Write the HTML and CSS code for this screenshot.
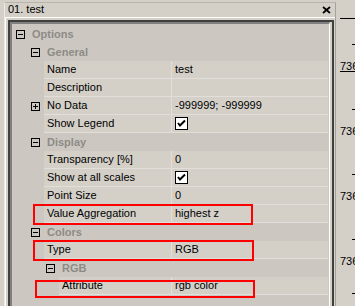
FILE: index.html
```html
<!DOCTYPE html>
<html>
  <head>
    <title>Layer properties</title>
    <link rel="stylesheet" href="styles.css">
  </head>
  <body>
    <div class="window">
      <div class="pane">
        <div class="titlebar">
          <span class="title">01. test</span>
          <svg class="close" width="9" height="8" viewBox="0 0 9 8">
            <path d="M1 1 L8 7 M8 1 L1 7" stroke="#000" stroke-width="1.7" fill="none" />
          </svg>
        </div>
        <div class="pane-body">
          <div class="frame">
            <div class="grid">

              <div class="row cat d0">
                <svg class="toggle" width="9" height="9" viewBox="0 0 9 9"><rect x="0.5" y="0.5" width="8" height="8" fill="none" stroke="#000" /><path d="M2 4.5 H7" stroke="#000" /></svg>
                <span class="cat-name">Options</span>
              </div>

              <div class="row cat d1">
                <svg class="toggle" width="9" height="9" viewBox="0 0 9 9"><rect x="0.5" y="0.5" width="8" height="8" fill="none" stroke="#000" /><path d="M2 4.5 H7" stroke="#000" /></svg>
                <span class="cat-name">General</span>
              </div>

              <div class="row prop d2">
                <div class="gutter"></div>
                <div class="label">Name</div>
                <div class="value">test</div>
              </div>

              <div class="row prop d2">
                <div class="gutter"></div>
                <div class="label">Description</div>
                <div class="value"></div>
              </div>

              <div class="row prop d2">
                <div class="gutter">
                  <svg class="toggle" width="9" height="9" viewBox="0 0 9 9"><rect x="0.5" y="0.5" width="8" height="8" fill="none" stroke="#000" /><path d="M2 4.5 H7 M4.5 2 V7" stroke="#000" /></svg>
                </div>
                <div class="label">No Data</div>
                <div class="value">-999999; -999999</div>
              </div>

              <div class="row prop d2">
                <div class="gutter"></div>
                <div class="label">Show Legend</div>
                <div class="value">
                  <svg class="check" width="13" height="13" viewBox="0 0 13 13"><rect x="0.5" y="0.5" width="12" height="12" fill="#fff" stroke="#000" /><path d="M3 6 L5 8.5 L10 3.5" stroke="#000" stroke-width="2" fill="none" /></svg>
                </div>
              </div>

              <div class="row cat d1">
                <svg class="toggle" width="9" height="9" viewBox="0 0 9 9"><rect x="0.5" y="0.5" width="8" height="8" fill="none" stroke="#000" /><path d="M2 4.5 H7" stroke="#000" /></svg>
                <span class="cat-name">Display</span>
              </div>

              <div class="row prop d2">
                <div class="gutter"></div>
                <div class="label">Transparency [%]</div>
                <div class="value">0</div>
              </div>

              <div class="row prop d2">
                <div class="gutter"></div>
                <div class="label">Show at all scales</div>
                <div class="value">
                  <svg class="check" width="13" height="13" viewBox="0 0 13 13"><rect x="0.5" y="0.5" width="12" height="12" fill="#fff" stroke="#000" /><path d="M3 6 L5 8.5 L10 3.5" stroke="#000" stroke-width="2" fill="none" /></svg>
                </div>
              </div>

              <div class="row prop d2">
                <div class="gutter"></div>
                <div class="label">Point Size</div>
                <div class="value">0</div>
              </div>

              <div class="row prop d2">
                <div class="gutter"></div>
                <div class="label">Value Aggregation</div>
                <div class="value">highest z</div>
                <div class="mark mark-agg"></div>
              </div>

              <div class="row cat d1">
                <svg class="toggle" width="9" height="9" viewBox="0 0 9 9"><rect x="0.5" y="0.5" width="8" height="8" fill="none" stroke="#000" /><path d="M2 4.5 H7" stroke="#000" /></svg>
                <span class="cat-name">Colors</span>
              </div>

              <div class="row prop d2">
                <div class="gutter"></div>
                <div class="label">Type</div>
                <div class="value">RGB</div>
                <div class="mark mark-type"></div>
              </div>

              <div class="row cat d2">
                <svg class="toggle" width="9" height="9" viewBox="0 0 9 9"><rect x="0.5" y="0.5" width="8" height="8" fill="none" stroke="#000" /><path d="M2 4.5 H7" stroke="#000" /></svg>
                <span class="cat-name">RGB</span>
              </div>

              <div class="row prop d3">
                <div class="gutter"></div>
                <div class="label">Attribute</div>
                <div class="value">rgb color</div>
                <div class="mark mark-attr"></div>
              </div>

            </div>
          </div>
        </div>
      </div>

      <div class="ruler">
        <div class="axis-line"></div>
        <div class="ruler-steps">
          <div class="step">
            <div class="tick"></div>
            <div class="tick-label first">736</div>
          </div>
          <div class="step">
            <div class="tick"></div>
            <div class="tick-label">736</div>
          </div>
          <div class="step">
            <div class="tick"></div>
            <div class="tick-label">736</div>
          </div>
          <div class="step">
            <div class="tick"></div>
            <div class="tick-label">736</div>
            <div class="tick tick-end"></div>
          </div>
        </div>
      </div>
    </div>
  </body>
</html>
```

FILE: styles.css
```css
body {
  margin: 0;
  width: 355px;
  height: 306px;
  overflow: hidden;
  background-color: #d4d0c8;
  font-family: "Liberation Sans", Arial, sans-serif;
  font-size: 11px;
  color: #000;
}

.window {
  display: flex;
  height: 306px;
}

/* left docked pane */
.pane {
  flex: none;
  width: 332px;
  box-sizing: border-box;
  margin: 2px 0 0 4px;
  border-top: 1px solid #b9b5ae;
  border-left: 1px solid #ebe9e5;
  border-right: 1px solid #a6a29a;
  display: flex;
  flex-direction: column;
}

.titlebar {
  height: 13px;
  line-height: 13px;
  padding: 0 4px 0 3px;
  display: flex;
  align-items: center;
  justify-content: space-between;
}

.close {
  display: block;
}

.pane-body {
  flex: 1;
  margin-top: 1px;
  border-top: 1px solid #fff;
  border-left: 1px solid #fff;
  padding: 2px 1px 0 2px;
  display: flex;
}

.frame {
  flex: 1;
  border-top: 2px solid #404040;
  border-left: 2px solid #404040;
  border-right: 2px solid #404040;
  padding-right: 2px;
  display: flex;
}

.grid {
  flex: 1;
  background-color: #ccc8c1;
  border-top: 2px solid #808080;
  border-left: 2px solid #808080;
  border-right: 1px solid #fff;
  padding: 1px 1px 0 0;
}

/* property grid rows */
.row {
  position: relative;
  display: flex;
  height: 18px;
}

.cat {
  align-items: center;
}

.toggle {
  display: block;
  flex: none;
}

.cat.d0 .toggle {
  margin-left: 4px;
}

.cat.d1 .toggle {
  margin-left: 19px;
}

.cat.d2 .toggle {
  margin-left: 34px;
}

.cat-name {
  margin-left: 7px;
  font-weight: bold;
  color: #8e8b86;
  line-height: 18px;
}

.gutter {
  flex: none;
  display: flex;
  align-items: center;
}

.d2 .gutter {
  width: 32px;
}

.d3 .gutter {
  width: 47px;
}

.gutter .toggle {
  margin-left: 19px;
}

.label,
.value {
  height: 17px;
  line-height: 17px;
  padding-left: 3px;
  background-color: #d4d0c8;
  border-bottom: 1px solid #e2dfda;
  white-space: nowrap;
  overflow: hidden;
}

.label {
  flex: 1;
  border-right: 1px solid #e2dfda;
}

.value {
  flex: none;
  width: 156px;
  box-sizing: border-box;
  height: 18px;
  display: flex;
  align-items: center;
}

.check {
  display: block;
}

/* red highlight frames drawn over the grid */
.mark {
  position: absolute;
  z-index: 1;
  box-sizing: border-box;
  border: 2px solid #f00;
}

.mark-agg {
  left: 21px;
  top: -1px;
  width: 220px;
  height: 21px;
}

.mark-type {
  left: 21px;
  top: -1px;
  width: 221px;
  height: 21px;
}

.mark-attr {
  left: 23px;
  top: 3px;
  width: 220px;
  height: 18px;
}

/* map ruler on the right */
.ruler {
  flex: none;
  width: 19px;
  overflow: hidden;
  white-space: nowrap;
  padding-top: 18px;
}

.axis-line {
  height: 1px;
  margin-left: 4px;
  background-color: #000;
}

.ruler-steps {
  margin-top: 25px;
}

.step {
  height: 65px;
}

.tick {
  width: 3px;
  height: 1px;
  margin-left: 16px;
  background-color: #000;
}

.tick-label {
  margin: 15px 0 0 4px;
  line-height: 13px;
}

.tick-label.first {
  text-decoration: underline;
}

.tick-end {
  margin-top: 25px;
}
```
